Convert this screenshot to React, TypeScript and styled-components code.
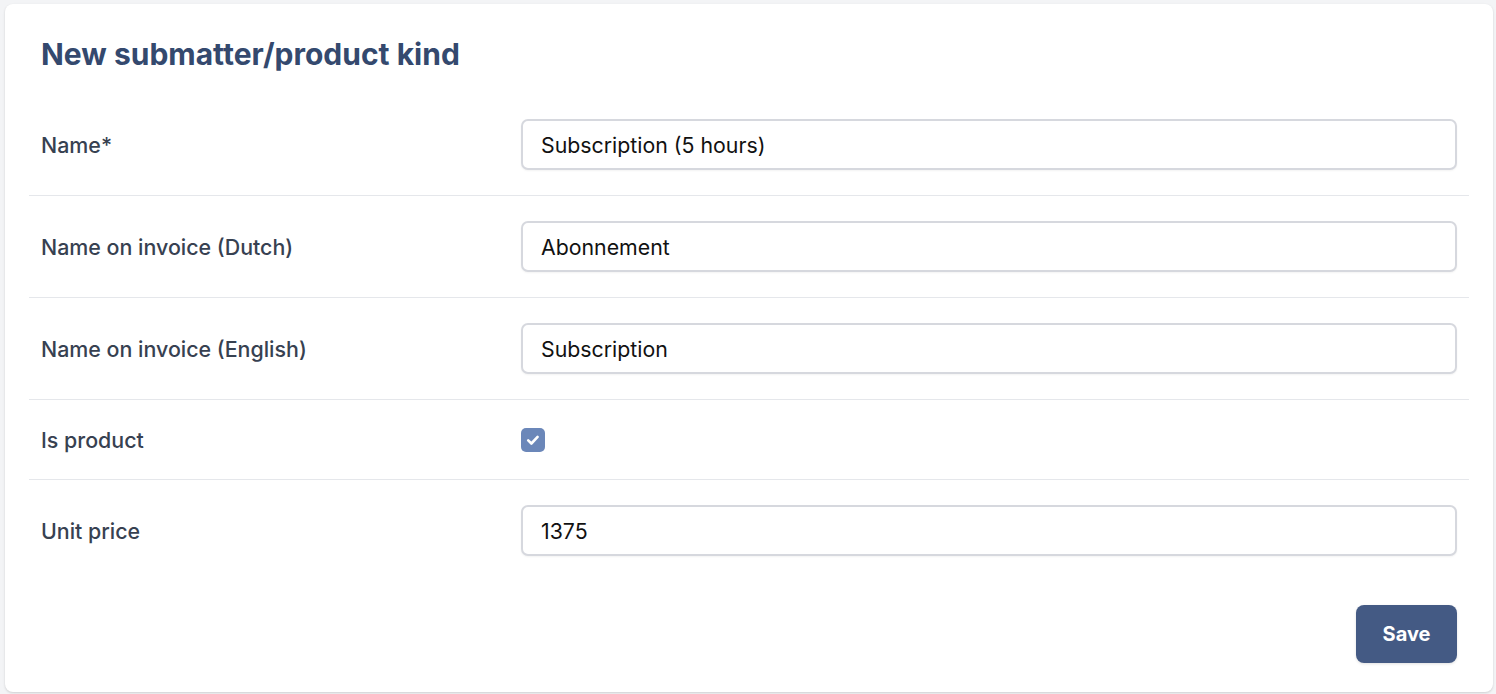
import React from "react";
import styled, { createGlobalStyle } from "styled-components";

const Global = createGlobalStyle`
  html, body { margin: 0; padding: 0; background: #f3f4f6; }
  body { font-family: Inter, "Noto Sans", sans-serif; -webkit-font-smoothing: antialiased; }
  * { box-sizing: border-box; }
`;

const Page = styled.div`
  padding: 4px 3px 3px 5px;
  min-height: 694px;
`;

const Card = styled.form`
  background: #ffffff;
  border-radius: 8px;
  box-shadow: 0 1px 3px rgba(0, 0, 0, 0.1), 0 1px 2px rgba(0, 0, 0, 0.06);
  padding: 30px 24px 29px 24px;
  display: flex;
  flex-direction: column;
`;

const Title = styled.h1`
  margin: 0;
  padding: 0 12px;
  font-size: 30px;
  line-height: 40px;
  font-weight: 700;
  color: #34496e;
  height: 60px;
`;

const Rows = styled.div`
  display: flex;
  flex-direction: column;
`;

const Row = styled.div<{ $last?: boolean }>`
  display: grid;
  grid-template-columns: 480px 1fr;
  align-items: center;
  padding: 25px 12px;
  border-bottom: ${(p) => (p.$last ? "none" : "1px solid #e5e7eb")};
  min-height: 80px;
`;

const Label = styled.label`
  font-size: 21.4px;
  font-weight: 500;
  color: #374151;
  line-height: 28px;
`;

const Input = styled.input`
  height: 51px;
  width: 100%;
  border: 2px solid #d6d8de;
  border-radius: 7px;
  padding: 0 18px;
  font-family: Inter, "Noto Sans", sans-serif;
  font-size: 21.3px;
  font-weight: 400;
  color: #111111;
  background: #fff;
  box-shadow: 0 1px 2px rgba(0, 0, 0, 0.05);
  outline: none;
`;

const Check = styled.span`
  width: 24px;
  height: 24px;
  border-radius: 5px;
  background: #6b87b9;
  display: inline-flex;
  align-items: center;
  justify-content: center;
  vertical-align: middle;
`;

const Footer = styled.div`
  display: flex;
  justify-content: flex-end;
  padding: 24px 12px 0 12px;
`;

const SaveButton = styled.button`
  width: 101px;
  height: 58px;
  background: #445a84;
  color: #fff;
  border: none;
  border-radius: 8px;
  font-family: Inter, "Noto Sans", sans-serif;
  font-size: 20px;
  font-weight: 700;
  box-shadow: 0 1px 3px rgba(0, 0, 0, 0.12);
  cursor: pointer;
`;

const fields: { label: string; value?: string; check?: boolean }[] = [
  { label: "Name*", value: "Subscription (5 hours)" },
  { label: "Name on invoice (Dutch)", value: "Abonnement" },
  { label: "Name on invoice (English)", value: "Subscription" },
  { label: "Is product", check: true },
  { label: "Unit price", value: "1375" },
];

export default function App() {
  return (
    <>
      <Global />
      <Page>
        <Card onSubmit={(e) => e.preventDefault()}>
          <Title>New submatter/product kind</Title>
          <Rows>
            {fields.map((f, i) => (
              <Row key={f.label} $last={i === fields.length - 1}>
                <Label>{f.label}</Label>
                <div>
                  {f.check ? (
                    <Check>
                      <svg width="18" height="18" viewBox="0 0 18 18" fill="none">
                        <path d="M4.2 9.4l3.2 3.1 6.2-6.6" stroke="#fff" strokeWidth="2.6" strokeLinecap="round" strokeLinejoin="round" />
                      </svg>
                    </Check>
                  ) : (
                    <Input defaultValue={f.value} />
                  )}
                </div>
              </Row>
            ))}
          </Rows>
          <Footer>
            <SaveButton type="submit">Save</SaveButton>
          </Footer>
        </Card>
      </Page>
    </>
  );
}
